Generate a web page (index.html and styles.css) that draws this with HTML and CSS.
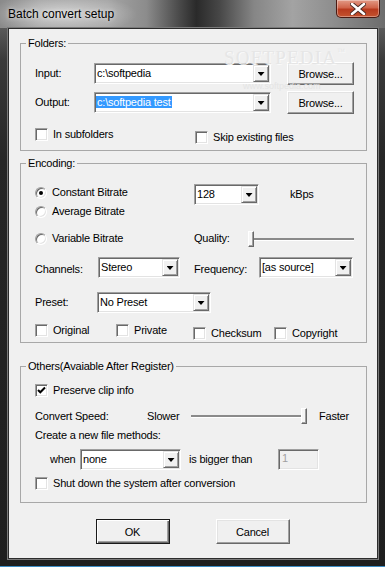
FILE: index.html
```html
<!DOCTYPE html>
<html lang="en">
<head>
    <meta charset="UTF-8">
    <meta name="viewport" content="width=device-width, initial-scale=1.0">
    <title>Batch convert setup</title>
    <link rel="stylesheet" href="styles.css">
</head>
<body>

    <div class="window">

        <div class="titlebar">
            <span class="title">Batch convert setup</span>
            <div class="close-btn">
                <svg width="16" height="12" viewBox="0 0 16 12">
                    <path d="M2 1 L14 11 M14 1 L2 11" stroke="#4a2a24" stroke-width="4.4" stroke-linecap="round"/>
                    <path d="M2 1 L14 11 M14 1 L2 11" stroke="#fff" stroke-width="2.6" stroke-linecap="round"/>
                </svg>
            </div>
        </div>

        <div class="client">

            <div class="watermark">SOFTPEDIA<span class="tm">™</span></div>
            <div class="watermark-url">www.softpedia.com</div>

            <fieldset class="group group-folders">
                <legend>Folders:</legend>
                <div class="row row-path">
                    <span class="label w-path">Input:</span>
                    <div class="combo combo-path">
                        <span class="combo-value">c:\softpedia</span>
                        <span class="combo-drop"></span>
                    </div>
                    <button class="btn btn-browse">Browse...</button>
                </div>
                <div class="row row-path row-output">
                    <span class="label w-path">Output:</span>
                    <div class="combo combo-path">
                        <span class="combo-value"><span class="selected">c:\softpedia test</span></span>
                        <span class="combo-drop"></span>
                    </div>
                    <button class="btn btn-browse">Browse...</button>
                </div>
                <div class="row row-folder-opts">
                    <label class="check w-subfolders"><span class="box"></span>In subfolders</label>
                    <label class="check check-low"><span class="box"></span>Skip existing files</label>
                </div>
            </fieldset>

            <fieldset class="group group-encoding">
                <legend>Encoding:</legend>
                <div class="row row-cbr">
                    <label class="radio w-bitrate radio-cbr"><span class="dot checked"></span>Constant Bitrate</label>
                    <div class="combo combo-kbps">
                        <span class="combo-value">128</span>
                        <span class="combo-drop"></span>
                    </div>
                    <span class="label unit">kBps</span>
                </div>
                <div class="row row-abr">
                    <label class="radio"><span class="dot"></span>Average Bitrate</label>
                </div>
                <div class="row row-vbr">
                    <label class="radio w-bitrate"><span class="dot"></span>Variable Bitrate</label>
                    <span class="label w-quality">Quality:</span>
                    <div class="slider slider-quality">
                        <span class="thumb"></span>
                        <span class="track"></span>
                    </div>
                </div>
                <div class="row row-channels">
                    <span class="label label-low w-channels">Channels:</span>
                    <div class="combo combo-channels">
                        <span class="combo-value">Stereo</span>
                        <span class="combo-drop"></span>
                    </div>
                    <span class="label label-low w-frequency">Frequency:</span>
                    <div class="combo combo-frequency">
                        <span class="combo-value">[as source]</span>
                        <span class="combo-drop"></span>
                    </div>
                </div>
                <div class="row row-preset">
                    <span class="label w-preset">Preset:</span>
                    <div class="combo combo-preset">
                        <span class="combo-value">No Preset</span>
                        <span class="combo-drop"></span>
                    </div>
                </div>
                <div class="row row-flags">
                    <label class="check w-original"><span class="box"></span>Original</label>
                    <label class="check w-private"><span class="box"></span>Private</label>
                    <label class="check check-low w-checksum"><span class="box"></span>Checksum</label>
                    <label class="check check-low"><span class="box"></span>Copyright</label>
                </div>
            </fieldset>

            <fieldset class="group group-others">
                <legend>Others(Avaiable After Register)</legend>
                <div class="row row-preserve">
                    <label class="check">
                        <span class="box">
                            <svg width="9" height="9" viewBox="0 0 9 9">
                                <path d="M1 4 L3.3 6.3 L8 1.5" stroke="#000" stroke-width="2" fill="none"/>
                            </svg>
                        </span>Preserve clip info
                    </label>
                </div>
                <div class="row row-speed">
                    <span class="label w-speed">Convert Speed:</span>
                    <span class="label w-slower">Slower</span>
                    <div class="slider slider-speed">
                        <span class="track"></span>
                        <span class="thumb"></span>
                    </div>
                    <span class="label faster">Faster</span>
                </div>
                <div class="row row-methods">
                    <span class="label">Create a new file methods:</span>
                </div>
                <div class="row row-when">
                    <span class="label w-when">when</span>
                    <div class="combo combo-when">
                        <span class="combo-value">none</span>
                        <span class="combo-drop"></span>
                    </div>
                    <span class="label w-bigger">is bigger than</span>
                    <div class="edit disabled">1</div>
                </div>
                <div class="row row-shutdown">
                    <label class="check"><span class="box"></span>Shut down the system after conversion</label>
                </div>
            </fieldset>

            <div class="actions">
                <button class="btn btn-action btn-default">OK</button>
                <button class="btn btn-action">Cancel</button>
            </div>

        </div>
    </div>

</body>
</html>
```

FILE: styles.css
```css
:root {
    --face: #f0f0f0;
    --light: #e3e3e3;
    --shadow: #a0a0a0;
    --darkShadow: #696969;
    --mainFont: "Liberation Sans", Arial, sans-serif;
}
* {
    box-sizing: border-box;
}
body {
    margin: 0;
    background-color: #1f1f1f;
    font-family: var(--mainFont);
    font-size: 11px;
    letter-spacing: -0.2px;
    color: #000;
}
.window {
    width: 385px;
    height: 567px;
    padding: 0 7px 7px 8px;
    display: flex;
    flex-direction: column;
    background:
        radial-gradient(ellipse 75px 20px at 62px 14px, rgba(255, 255, 255, 0.55), rgba(255, 255, 255, 0) 100%) no-repeat,
        linear-gradient(to right, #8a8a8a 0, #9f9f9f 10%, #a4a4a4 28%, #8c8c8c 38%, #4e4e4e 46%, #2a2a2a 51%, #474747 57%, #868686 66%, #a3a3a3 76%, #8f8f8f 86%, #6c6c6c 100%) 0 0 / 100% 28px no-repeat,
        linear-gradient(#5a5a5a 28px, #3a3a3a 60px, #262626 160px, #1e1e1e 100%);
    border-bottom: 1px solid #3d8cc4;
}
.titlebar {
    height: 28px;
    flex-shrink: 0;
    display: flex;
    align-items: flex-start;
}
.title {
    margin-top: 7px;
    font-size: 12px;
    line-height: 14px;
    letter-spacing: 0;
    color: #000;
    text-shadow: 0 0 4px rgba(255, 255, 255, 0.8);
}
.close-btn {
    margin-left: auto;
    margin-right: -2px;
    width: 44px;
    height: 18px;
    display: flex;
    align-items: center;
    justify-content: center;
    border: 1px solid #4a1a12;
    border-top: none;
    border-radius: 0 0 5px 5px;
    background: linear-gradient(#e29a86 0, #d0644a 45%, #b83a1e 55%, #c4532f 100%);
    box-shadow: inset 0 0 0 1px rgba(255, 255, 255, 0.35);
}
.client {
    flex: 1;
    position: relative;
    display: flex;
    flex-direction: column;
    padding: 8px 10px 0 11px;
    background-color: var(--face);
    border: 1px solid #2c2c2c;
    box-shadow: 0 0 0 1px #7a7a7a;
}
.watermark {
    position: absolute;
    top: 18px;
    left: 215px;
    font-size: 19px;
    letter-spacing: 1.2px;
    color: #e6e6e6;
    text-shadow: 1px 1px 0 #fafafa;
    font-family: "Liberation Serif", serif;
}
.watermark .tm {
    font-size: 8px;
    vertical-align: top;
}
.watermark-url {
    position: absolute;
    top: 52px;
    left: 234px;
    font-size: 9px;
    letter-spacing: 0;
    color: #e4e4e4;
}

/* group boxes */
.group {
    margin: 0;
    padding: 0 0 0 5px;
    border: 1px solid #a8a8a8;
    min-inline-size: 0;
}
.group legend {
    padding: 0 2px;
    line-height: 13px;
}
.group-folders {
    padding-bottom: 6px;
}
.group-encoding {
    margin-top: 6px;
    padding-bottom: 2px;
}
.group-others {
    margin-top: 17px;
    padding-bottom: 12px;
}
.row {
    display: flex;
    align-items: center;
    margin-left: 9px;
}
.label {
    line-height: 13px;
    white-space: nowrap;
}
.label-low {
    margin-top: 4px;
}

/* folders */
.row-path {
    height: 23px;
    margin-top: 12px;
}
.row-output {
    margin-top: 6px;
}
.w-path {
    width: 59px;
}
.combo-path {
    width: 177px;
}
.btn-browse {
    width: 67px;
    height: 23px;
    margin-left: 16px;
}
.row-folder-opts {
    height: 16px;
    margin-top: 14px;
    align-items: flex-start;
}
.w-subfolders {
    width: 160px;
}
.check-low {
    margin-top: 3px;
}

/* encoding */
.row-cbr {
    height: 21px;
    margin-top: 14px;
}
.radio-cbr {
    align-self: flex-start;
    margin-top: 2px;
}
.w-bitrate {
    width: 159px;
}
.combo-kbps {
    width: 65px;
}
.unit {
    margin-left: 31px;
}
.row-abr {
    height: 13px;
}
.row-vbr {
    height: 17px;
    margin-top: 12px;
}
.w-quality {
    width: 54px;
}
.slider-quality {
    width: 106px;
}
.row-channels {
    height: 21px;
    margin-top: 10px;
}
.w-channels {
    width: 63px;
}
.combo-channels {
    width: 82px;
}
.w-frequency {
    width: 65px;
    margin-left: 14px;
}
.combo-frequency {
    width: 94px;
}
.row-preset {
    height: 21px;
    margin-top: 14px;
}
.w-preset {
    width: 62px;
}
.combo-preset {
    width: 114px;
}
.row-flags {
    height: 17px;
    margin-top: 10px;
    align-items: flex-start;
}
.row-flags .check {
    margin-top: 1px;
}
.row-flags .check-low {
    margin-top: 4px;
}
.w-original {
    width: 81px;
}
.w-private {
    width: 77px;
}
.w-checksum {
    width: 81px;
}

/* others */
.row-preserve {
    height: 13px;
    margin-top: 11px;
}
.row-speed {
    height: 16px;
    margin-top: 11px;
}
.w-speed {
    width: 112px;
}
.w-slower {
    width: 44px;
}
.slider-speed {
    width: 116px;
}
.faster {
    margin-left: 12px;
}
.row-methods {
    height: 13px;
    margin-top: 5px;
}
.row-when {
    height: 21px;
    margin-top: 7px;
    margin-left: 24px;
}
.w-when {
    width: 30px;
}
.combo-when {
    width: 101px;
}
.w-bigger {
    width: 89px;
    margin-left: 8px;
}
.row-shutdown {
    height: 13px;
    margin-top: 7px;
}

/* buttons row */
.actions {
    display: flex;
    justify-content: center;
    gap: 46px;
    margin-top: 16px;
    margin-left: -2px;
}
.btn {
    padding: 0;
    font-family: var(--mainFont);
    font-size: 11px;
    letter-spacing: -0.2px;
    color: #000;
    background-color: var(--face);
    border: 1px solid;
    border-color: #fff var(--darkShadow) var(--darkShadow) #fff;
    box-shadow: inset -1px -1px 0 var(--shadow), inset 1px 1px 0 var(--light);
}
.btn-action {
    width: 74px;
    height: 25px;
}
.btn-default {
    border-color: #1a1a1a;
    box-shadow: inset 1px 1px 0 #fff, inset -1px -1px 0 var(--darkShadow), inset -2px -2px 0 var(--shadow);
}

/* sunken controls */
.combo,
.edit,
.box,
.dot {
    background-color: #fff;
    border: 1px solid;
    border-color: var(--shadow) #fff #fff var(--shadow);
    box-shadow: inset 1px 1px 0 var(--darkShadow), inset -1px -1px 0 var(--light);
}
.combo {
    height: 21px;
    padding: 1px;
    display: flex;
    align-items: center;
}
.combo-value {
    flex: 1;
    padding-left: 1px;
    line-height: 13px;
    white-space: nowrap;
    overflow: hidden;
}
.selected {
    background-color: #3399ff;
    color: #fff;
    padding: 0 1px 0 1px;
    margin-left: -1px;
}
.combo-drop {
    width: 16px;
    height: 17px;
    display: flex;
    align-items: center;
    justify-content: center;
    background-color: var(--face);
    border: 1px solid;
    border-color: var(--light) var(--darkShadow) var(--darkShadow) var(--light);
    box-shadow: inset 1px 1px 0 #fff, inset -1px -1px 0 var(--shadow);
}
.combo-drop::after {
    content: "";
    width: 7px;
    height: 4px;
    margin-top: 1px;
    background-color: #000;
    clip-path: polygon(0 0, 100% 0, 50% 100%);
}
.edit {
    width: 41px;
    height: 21px;
    padding: 2px 0 0 3px;
    line-height: 13px;
}
.edit.disabled {
    background-color: var(--face);
    color: #a0a0a0;
}

/* checkboxes and radios */
.check,
.radio {
    display: flex;
    align-items: center;
    gap: 5px;
    line-height: 13px;
    white-space: nowrap;
}
.box {
    width: 13px;
    height: 13px;
    flex-shrink: 0;
    display: flex;
    align-items: center;
    justify-content: center;
}
.dot {
    width: 12px;
    height: 12px;
    flex-shrink: 0;
    border-radius: 50%;
    display: flex;
    align-items: center;
    justify-content: center;
}
.dot.checked::after {
    content: "";
    width: 4px;
    height: 4px;
    border-radius: 50%;
    background-color: #000;
}

/* trackbars */
.slider {
    height: 16px;
    display: flex;
    align-items: center;
}
.track {
    flex: 1;
    height: 2px;
    background-color: #8a8a8a;
    box-shadow: 0 1px 0 #fff;
}
.thumb {
    width: 6px;
    height: 16px;
    flex-shrink: 0;
    background-color: #f6f6f6;
    border: 1px solid;
    border-color: #fff var(--darkShadow) var(--darkShadow) #fff;
    box-shadow: inset -1px -1px 0 var(--shadow);
}
```
